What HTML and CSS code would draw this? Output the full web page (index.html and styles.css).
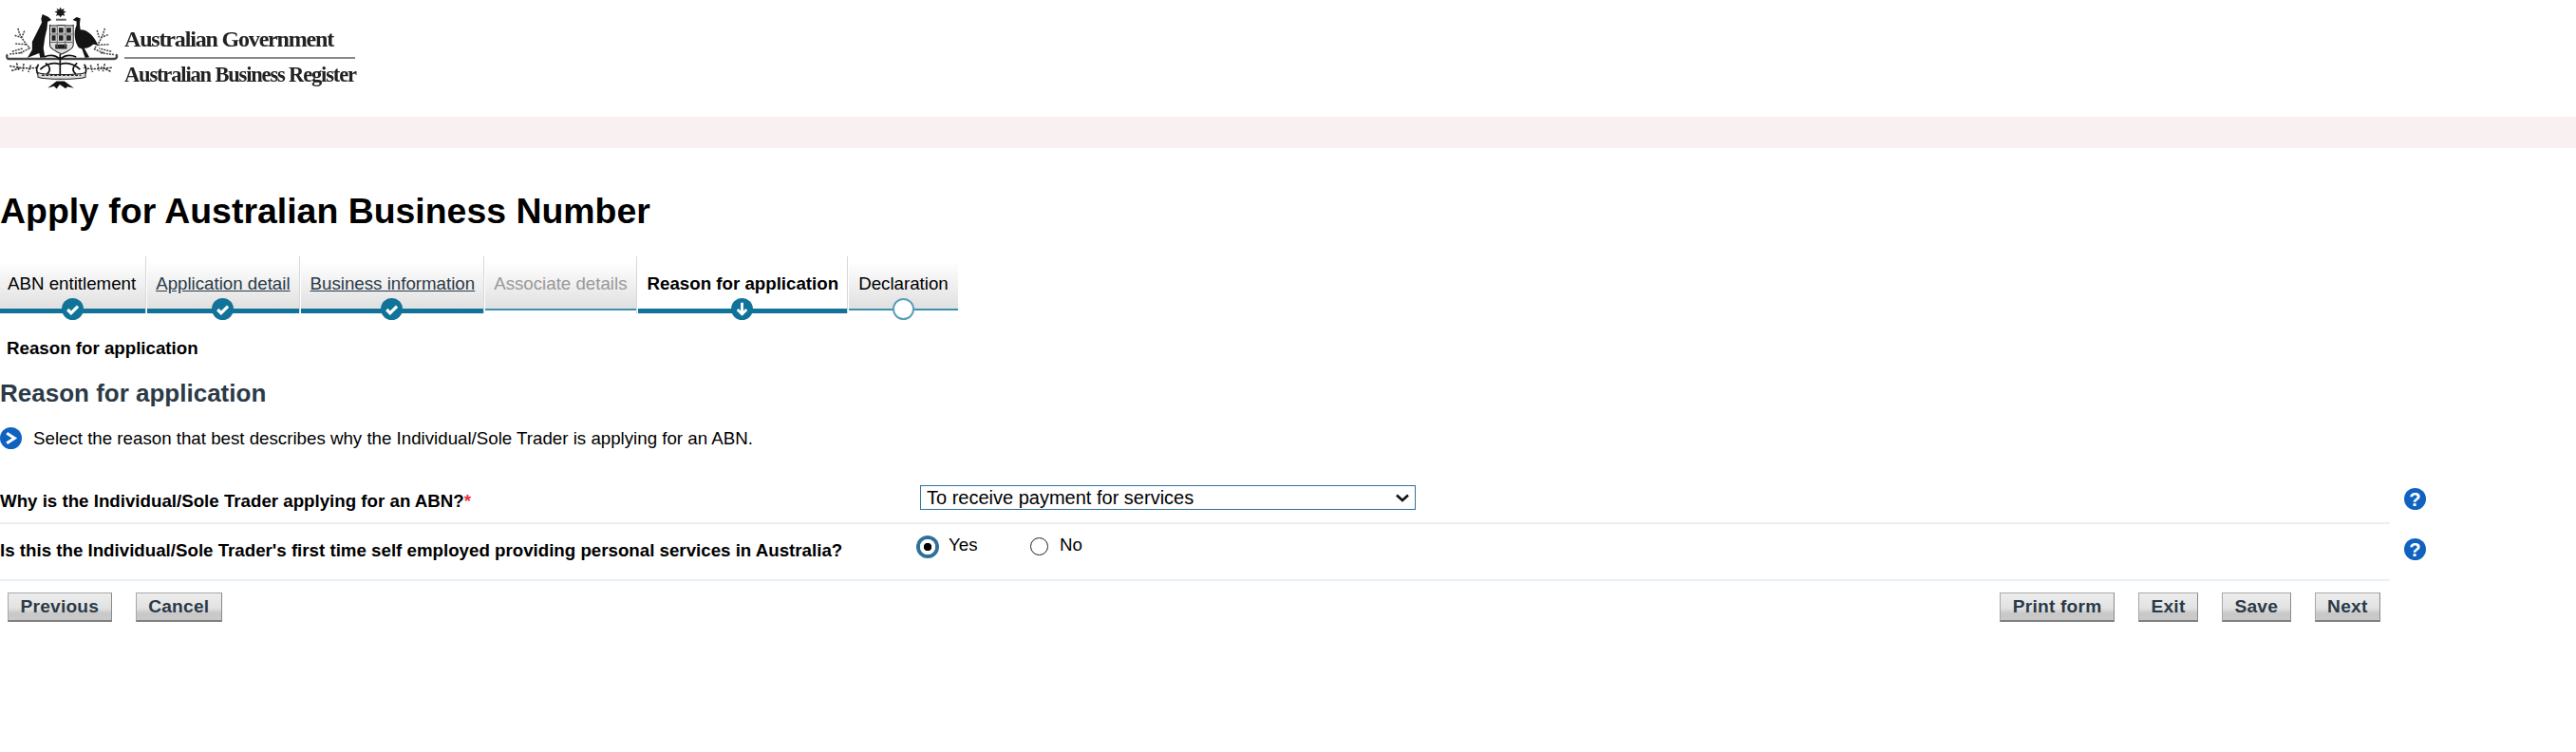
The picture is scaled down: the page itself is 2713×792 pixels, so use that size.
FILE: index.html
```html
<!DOCTYPE html>
<html lang="en">
<head>
<meta charset="utf-8">
<title>Apply for Australian Business Number</title>
<link rel="stylesheet" href="styles.css">
</head>
<body>
<header class="masthead">
  <svg class="crest" viewBox="0 0 384 295" aria-hidden="true">
    <!-- star and motto bar -->
    <path d="M188 22l4 8 8-4-3 8 9 2-8 5 4 8-9-2-5 7-5-7-9 2 4-8-8-5 9-2-3-8 8 4z" fill="#1a1a1a"/>
    <path d="M174 58h32v6h-32z" fill="#666"/>
    <!-- kangaroo -->
    <path d="M132 44l18 8 10 10-12 6-2 22-6 25-5 35 5 28-15 2-3-15-17 7-20 8 15-25v-25l15-30 15-30-2-12z" fill="#141414"/>
    <!-- emu -->
    <path d="M226 62l12-9 12 4-2 18 2 17c25 0 45 23 55 48l-15-2c-10 10-20 12-28 12l16 28-13 2-10-28-10-4c-13-18-17-48-7-70v-12z" fill="#141414"/>
    <!-- shield -->
    <path d="M155 78c10 4 25 0 36 0s25 4 37 0v62c0 12-22 22-36 28-14-6-37-16-37-28z" fill="#ddd" stroke="#222" stroke-width="3"/>
    <path d="M161 86h12v16h-12zM183 86h14v16h-14zM207 86h14v16h-14zM161 110h12v16h-12zM183 110h14v16h-14zM207 110h14v16h-14zM172 138h36v14h-36z" fill="#222"/>
    <path d="M178 80v68M203 80v68M157 106h69M157 131h69" stroke="#666" stroke-width="3" fill="none"/>
    <!-- compartment bar -->
    <path d="M24 170c-5 3-3 14 5 13h326c9 0 11-10 5-13" fill="none" stroke="#444" stroke-width="7"/>
    <!-- upper wattle -->
    <g fill="none" stroke="#444" stroke-width="4.500" stroke-dasharray="6 3">
      <path d="M56 88c4 22 18 42 38 62M46 110l26 8M76 96l-8 20M48 136l34 2M92 150l-32 16M38 160l34-10M30 168l40-4"/>
      <path d="M326 88c-6 22-14 42-32 62M336 108l-26 10M302 94l6 22M338 138l-36 2M292 152l34 14M346 160l-38-10M354 170l-42-6"/>
    </g>
    <!-- lower sprays -->
    <g fill="none" stroke="#333" stroke-width="4.500" stroke-dasharray="7 3">
      <path d="M30 205c30 6 60 10 90 4M52 196l6 22M74 198l-4 24M96 202l-8 22M36 220l30-10"/>
      <path d="M348 210c-30 4-60 6-90 0M326 198l-6 24M304 198l4 22M282 202l6 22M344 222l-30-14"/>
    </g>
    <!-- centre stems and scroll -->
    <g fill="none" stroke="#111" stroke-width="5">
      <path d="M187 168v80M187 185c-14-14-30-16-50-8M187 185c14-14 30-16 50-8M187 200c-22-8-40-4-62 16M187 200c22-8 40-4 62 16"/>
      <path d="M120 200c-8 10-8 24 0 32M262 200c8 10 8 24 0 32M142 196c16 12 16 26 4 34M240 196c-16 12-16 26-4 34"/>
    </g>
    <path d="M118 226c22 8 124 8 148 0v14c-24 8-126 8-148 0z" fill="#ddd" stroke="#222" stroke-width="3"/>
    <path d="M130 234h122" stroke="#222" stroke-width="4" stroke-dasharray="8 5" fill="none"/>
    <!-- roots -->
    <path d="M148 274l28-22h24l30 22-20-5-6 6-18-12-10 13-8-8z" fill="#111"/>
  </svg>
  <div class="agency">
    <span class="agency-gov">Australian Government</span>
    <span class="agency-abr">Australian Business Register</span>
  </div>
</header>
<div class="band"></div>
<main>
  <h1 class="page-title">Apply for Australian Business Number</h1>
  <nav class="steps">
    <div class="step done">
      <span class="step-label">ABN entitlement</span>
      <svg class="step-mark" viewBox="0 0 24 24"><circle cx="12" cy="12" r="12" fill="#12739a"/><path d="M6.500 12.500l3.800 3.800 7.500-7.300" fill="none" stroke="#fff" stroke-width="3.400"/></svg>
    </div>
    <div class="step done">
      <a class="step-label" href="#">Application detail</a>
      <svg class="step-mark" viewBox="0 0 24 24"><circle cx="12" cy="12" r="12" fill="#12739a"/><path d="M6.500 12.500l3.800 3.800 7.500-7.300" fill="none" stroke="#fff" stroke-width="3.400"/></svg>
    </div>
    <div class="step done step-wide">
      <a class="step-label" href="#">Business information</a>
      <svg class="step-mark" viewBox="0 0 24 24"><circle cx="12" cy="12" r="12" fill="#12739a"/><path d="M6.500 12.500l3.800 3.800 7.500-7.300" fill="none" stroke="#fff" stroke-width="3.400"/></svg>
    </div>
    <div class="step disabled">
      <span class="step-label">Associate details</span>
    </div>
    <div class="step current">
      <span class="step-label">Reason for application</span>
      <svg class="step-mark" viewBox="0 0 24 24"><circle cx="12" cy="12" r="12" fill="#12739a"/><path d="M12 5v12M7 12.500l5 5 5-5" fill="none" stroke="#fff" stroke-width="3"/></svg>
    </div>
    <div class="step todo">
      <span class="step-label">Declaration</span>
      <svg class="step-mark" viewBox="0 0 24 24"><circle cx="12" cy="12" r="11" fill="#fff" stroke="#5a9db8" stroke-width="2"/></svg>
    </div>
  </nav>
  <div class="crumb">Reason for application</div>
  <h2 class="section-title">Reason for application</h2>
  <p class="hint">
    <svg class="hint-icon" viewBox="0 0 24 24"><circle cx="12" cy="12" r="12" fill="#0f62c0"/><path d="M7.500 6.500l8.500 5.500-8.500 5.500" fill="none" stroke="#fff" stroke-width="3.200"/></svg>
    <span>Select the reason that best describes why the Individual/Sole Trader is applying for an ABN.</span>
  </p>
  <div class="rows">
    <div class="row row-one">
      <label class="q" for="reason">Why is the Individual/Sole Trader applying for an ABN?<span class="req">*</span></label>
      <div class="answer">
        <select id="reason" class="select">
          <option>To receive payment for services</option>
        </select>
        <svg class="chevron" viewBox="0 0 14 9"><path d="M1 1.500l6 5.500 6-5.500" fill="none" stroke="#111" stroke-width="2.600"/></svg>
      </div>
      <svg class="help" viewBox="0 0 24 24"><circle cx="12" cy="12" r="12" fill="#0f62c0"/><text x="12" y="19.500" text-anchor="middle" class="help-mark">?</text></svg>
    </div>
    <div class="row row-two">
      <div class="q">Is this the Individual/Sole Trader's first time self employed providing personal services in Australia?</div>
      <div class="answer radios">
        <span class="radio-item radio-yes"><span class="radio on"></span><span>Yes</span></span>
        <span class="radio-item radio-no"><span class="radio"></span><span>No</span></span>
      </div>
      <svg class="help" viewBox="0 0 24 24"><circle cx="12" cy="12" r="12" fill="#0f62c0"/><text x="12" y="19.500" text-anchor="middle" class="help-mark">?</text></svg>
    </div>
  </div>
  <div class="actions">
    <div class="btn-group">
      <button class="btn" type="button">Previous</button>
      <button class="btn" type="button">Cancel</button>
    </div>
    <div class="btn-group">
      <button class="btn" type="button">Print form</button>
      <button class="btn" type="button">Exit</button>
      <button class="btn" type="button">Save</button>
      <button class="btn" type="button">Next</button>
    </div>
  </div>
</main>
</body>
</html>
```
FILE: styles.css
```css
* { box-sizing: border-box; }
html, body { margin: 0; padding: 0; background: #fff; }
body { font-family: "Liberation Sans", Arial, sans-serif; font-size: 18.72px; color: #000; height: 792px; overflow: hidden; }

.masthead { height: 123px; display: flex; align-items: flex-start; }
.crest { width: 130px; height: 100px; flex: none; filter: blur(.5px); }
.agency { margin: 28px 0 0 1px; width: 243px; display: flex; flex-direction: column; font-family: "Liberation Serif", serif; font-weight: 700; color: #222; filter: blur(.4px); }
.agency-gov { font-size: 24px; letter-spacing: -1.170px; line-height: 27px; height: 34px; border-bottom: 2px solid #888; white-space: nowrap; }
.agency-abr { font-size: 22.500px; letter-spacing: -1.160px; line-height: 27px; margin-top: 3px; white-space: nowrap; }
.band { height: 33px; background: #f9f1f1; }

.page-title { margin: 0; padding-top: 44px; height: 114px; font-size: 37.440px; line-height: 44px; font-weight: 700; color: #000; }

.steps { display: flex; align-items: stretch; height: 60px; }
.step { position: relative; height: 60px; margin-right: 1px; padding: 16px 9px 0; background: linear-gradient(#fff 10%, #e0e0e0) no-repeat 0 0 / 100% 55px; border-right: 1px solid #d8d8d8; white-space: nowrap; text-align: center; }
.step:first-child { padding-left: 8px; padding-right: 10px; }
.step-wide { padding-left: 10px; }
.step::before { content: ""; position: absolute; left: 0; right: 0; top: 55px; height: 5px; background: #12739a; }
.step-label { font-size: 18.720px; line-height: 26px; color: #000; }
a.step-label { color: #2b3a47; text-decoration: underline; }
.step-mark { position: absolute; left: 50%; bottom: -7px; width: 23px; height: 23px; margin-left: -11.500px; }
.step.disabled::before, .step.todo::before { height: 2px; background: #3d8fb0; }
.step.disabled .step-label { color: #999; }
.step.current { background: #fff; padding: 16px 9px 0 10px; }
.step.current .step-label { font-weight: 700; }
.step.todo { border-right: 0; margin-right: 0; padding: 16px 10px 0; }

.crumb { margin-top: 26px; padding-left: 7px; font-size: 18.720px; line-height: 22px; font-weight: 700; }
.section-title { margin: 21px 0 0; font-size: 26px; line-height: 30px; font-weight: 700; color: #2b3a47; }
.hint { margin: 20px 0 0; display: flex; align-items: center; gap: 12px; font-size: 18.720px; line-height: 24px; height: 24px; }
.hint-icon { width: 23px; height: 23px; flex: none; }
.hint span { position: relative; top: 1px; }

.rows { width: 2517px; }
.row { position: relative; display: grid; grid-template-columns: 969px 1fr; border-bottom: 2px solid #e8eff5; }
.row-one { height: 79px; padding-top: 43px; }
.row-two { height: 60px; padding-top: 16px; }
.q { font-size: 18.720px; line-height: 24px; font-weight: 700; white-space: nowrap; }
.req { color: #e8323a; }
.answer { position: relative; display: flex; align-items: flex-start; }
.select { appearance: none; width: 522px; height: 26px; margin-top: -5px; padding: 0 0 0 6px; font-family: "Liberation Sans", Arial, sans-serif; font-size: 20px; color: #000; background: #fff; border: 1px solid #2f7199; border-radius: 0; }
.chevron { position: absolute; left: 501px; top: 4px; width: 14px; height: 9px; pointer-events: none; }
.help { position: absolute; left: 2532px; width: 23px; height: 23px; }
.row-one .help { top: 41px; }
.row-two .help { top: 15px; }
.help-mark { font-family: "Liberation Sans", Arial, sans-serif; font-size: 21px; font-weight: 700; fill: #fff; }

.radios { font-size: 18.720px; line-height: 24px; margin-top: -6px; }
.radio-item { display: inline-flex; align-items: flex-start; gap: 13px; }
.radio-yes { width: 116px; }
.radio-no { gap: 12px; }
.radio { width: 19px; height: 19px; margin-top: 3.500px; border: 1.500px solid #222; border-radius: 50%; background: #fff; flex: none; }
.radio.on { width: 16px; height: 16px; margin: 6px 1px 0 0; border: 0; background: radial-gradient(circle, #000 4px, #fff 4.500px); box-shadow: 0 0 0 4px #2f7199; }

.actions { display: flex; justify-content: space-between; width: 2507px; padding: 12px 0 0 8px; }
.btn-group { display: flex; gap: 25px; }
.btn { height: 31px; padding: 0 12.500px; font-family: "Liberation Sans", Arial, sans-serif; font-size: 19.200px; font-weight: 700; letter-spacing: .2px; line-height: 26px; color: #2b3a47; background: linear-gradient(#ededed, #e2e2e2 55%, #c8c8c8 75%, #cacaca); border: 1px solid #a8a8a8; border-right-color: #8a8a8a; border-bottom: 2px solid #808080; border-radius: 0; }
```
